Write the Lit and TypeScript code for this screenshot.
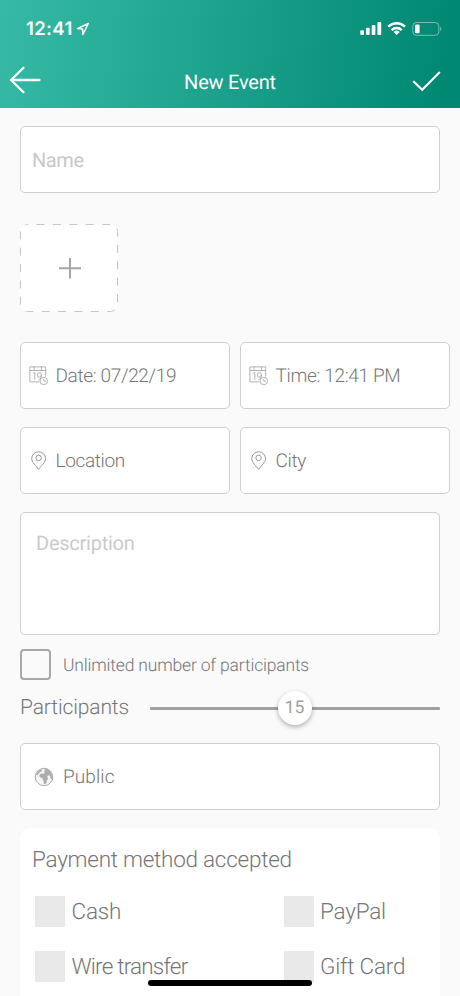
import { LitElement, html, css, svg } from "lit";
import { customElement } from "lit/decorators.js";

const calendarIcon = svg`<svg class="ico" width="20" height="20" viewBox="0 0 20 20" fill="none" stroke="#a9a9a9" stroke-width=".9">
  <path d="M10.500 15.900H.9V.9h15.800v9.800M.9 4.500h15.800M5 .5v4M12.400 .5v4"/>
  <path d="M4 7.500 5.800 6.600v7.200M12.400 8.900a2.100 2.300 0 1 0-4.200 0 2.100 2.300 0 0 0 4.200 0c0 2.600-.7 4.500-3 4.900"/>
  <circle cx="14.800" cy="15" r="3.700"/><path d="M14.800 12.800v2.400h2"/>
</svg>`;

const pinIcon = svg`<svg class="ico" width="20" height="20" viewBox="0 0 20 20" fill="none" stroke="#999" stroke-width="1">
  <path d="M9.600 18.300C7.200 15.100 2.700 11.100 2.700 7.700a6.950 6.950 0 0 1 13.900 0c0 3.400-4.500 7.400-7 10.600z"/>
  <circle cx="9.600" cy="6.900" r="2.700"/>
</svg>`;

const globeIcon = svg`<svg class="ico" width="20" height="20" viewBox="0 0 20 20">
  <circle cx="10" cy="10" r="8.700" fill="#f6f6f6" stroke="#ababab" stroke-width="1"/>
  <path fill="#adadad" d="M10.300 2.100 13.500 2l2.600 1.900 1.600 2.900.6 3-.5 2.600-1.200-.6-.2-2.200-1.300-1.300-1.400.2-.5 1.800 1 1.200-1.300 1.900-.4 2.300-1.400 1.500-1.200-.3-.3-2.600-.9-1.500.2-1.400-1.800-.6-1.800-1.400.4-1.800 1.900-1.200 2.500.1.900-1.200-1.200-.9 1.100-1z"/>
  <path fill="#adadad" d="M2 7.300 4.300 4l2.400-1.500L8.400 3 7 4.800l-1.900.9-.6 1.500-1.800 1z"/>
</svg>`;

@customElement("app-root")
export class AppRoot extends LitElement {
  static styles = css`
    :host { display: block; width: 460px; height: 996px; overflow: hidden; position: relative; background: #fafafa; font-family: Roboto, "Liberation Sans", sans-serif; font-weight: 300; color: #767679; text-rendering: geometricPrecision; }
    * { box-sizing: border-box; }
    svg { display: block; flex: none; }
    span { white-space: nowrap; }
    header { height: 108px; background: linear-gradient(98deg, #36baa6 0%, #1aa08b 50%, #018873 96%); color: #fff; display: flex; flex-direction: column; }
    .status { height: 54px; padding: 4px 18px 0 26px; display: flex; align-items: center; }
    .clock { font: 600 18.500px/22px Inter, sans-serif; letter-spacing: .35px; }
    .loc { margin: -1px 0 0 3px; }
    .sys { margin-left: auto; margin-top: -2px; }
    .nav { height: 54px; display: grid; grid-template-columns: 60px 1fr 60px; align-items: center; }
    .back { margin-top: -2px; }
    .title { font-size: 20px; font-weight: 400; text-align: center; letter-spacing: -.22px; padding-top: 2px; }
    main { padding: 18px 20px 0; display: flex; flex-direction: column; }
    .box { background: #fff; border: 1px solid #d0d0d0; border-radius: 5px; height: 67px; display: flex; align-items: center; font-size: 19px; }
    .hint { color: #c8c8cc; font-weight: 400; font-size: 20px; }
    .name { padding-left: 11px; }
    .nm { letter-spacing: -.4px; }
    .add { margin-top: 31px; width: 98px; height: 88px; }
    .pair { display: grid; grid-template-columns: 210px 210px; gap: 10px; margin-top: 30px; }
    .pair.next { margin-top: 18px; }
    .pair .box { padding-left: 8px; gap: 6.500px; letter-spacing: -.35px; }
    .desc { height: 123px; margin-top: 18px; padding: 18px 15px; align-items: flex-start; }
    .desc span { line-height: 24px; color: #cbcbcd; letter-spacing: -.25px; }
    .unlimited { display: flex; align-items: center; margin-top: 14px; height: 31px; gap: 12px; font-size: 17.500px; letter-spacing: -.18px; }
    .unlimited span { padding-top: 2px; }
    .check { width: 31px; height: 31px; border: 2px solid #a8a8a8; border-radius: 4px; }
    .participants { height: 54px; display: flex; align-items: center; font-size: 21px; gap: 20px; letter-spacing: -.13px; }
    .participants .lbl { width: 109.500px; padding-top: 2px; }
    .slider { flex: 1; height: 35px; display: flex; align-items: center; position: relative; margin-top: 2px; }
    .track { height: 3px; width: 100%; background: #a0a0a0; border-radius: 1px; }
    .thumb { position: absolute; left: 128px; top: 0; width: 34px; height: 34px; border-radius: 50%; background: #fff; box-shadow: 0 2px 5px rgba(0,0,0,.3); display: flex; align-items: center; justify-content: center; font-size: 17.500px; font-weight: 400; color: #a0a0a0; padding-top: 1px; }
    .public { margin-top: 9px; padding-left: 13px; gap: 9px; letter-spacing: .1px; }
    .card { background: #fff; border-radius: 10px; margin-top: 18px; height: 240px; padding: 16px 12px; }
    .ctitle { font-size: 22.500px; line-height: 33px; letter-spacing: -.25px; }
    .methods { display: grid; grid-template-columns: 248.500px 1fr; row-gap: 24px; margin: 19px 0 0 3px; }
    .method { display: flex; align-items: center; gap: 6.500px; font-size: 22.500px; height: 31px; letter-spacing: -.22px; }
    .method .tight { letter-spacing: -.8px; }
    .sq { width: 30px; height: 31px; background: #e9e9e9; }
    .home { position: absolute; left: 148px; top: 980px; width: 164px; height: 6px; border-radius: 3px; background: #000; }
  `;

  private method(name: string, cls = "") {
    return html`<div class="method"><div class="sq"></div><span class=${cls}>${name}</span></div>`;
  }

  render() {
    return html`
      <header>
        <div class="status">
          <span class="clock">12:41</span>
          <svg class="loc" width="14" height="14" viewBox="0 0 14 14" fill="none" stroke="#fff" stroke-width="1.500" stroke-linejoin="round"><path d="M12.300 1.500 1.500 6.600l5 .5.400 5.400z"/></svg>
          <svg class="sys" width="84" height="18" viewBox="0 0 84 18" fill="#fff">
            <rect x="2.300" y="11.200" width="3.700" height="4.800" rx="1"/><rect x="8" y="8.800" width="3.700" height="7.200" rx="1"/><rect x="13.700" y="6" width="3.700" height="10" rx="1"/><rect x="19.400" y="3" width="3.800" height="13" rx="1"/>
            <g fill="none" stroke="#fff" stroke-width="2.500"><path d="M30.300 7.700a12 12 0 0 1 16.800 0"/><path d="M33.700 11.100a7.200 7.200 0 0 1 10 0"/></g>
            <path d="m38.700 16-3-3a4.300 4.300 0 0 1 6 0z"/>
            <rect x="54.800" y="3.500" width="26" height="12.800" rx="3.500" fill="none" stroke="#fff" stroke-opacity=".45"/>
            <rect x="57" y="5.500" width="4.600" height="8.800" rx="1.200"/><path d="M82.200 7.800c1.600.8 1.600 3.400 0 4.200z" opacity=".5"/>
          </svg>
        </div>
        <div class="nav">
          <svg class="back" width="50" height="30" viewBox="0 0 50 30" fill="none" stroke="#fff" stroke-width="2.300" stroke-linecap="round" stroke-linejoin="round"><path d="M23.500 2.800 11 15l12.500 12.200M11 15h28.500"/></svg>
          <span class="title">New Event</span>
          <svg width="50" height="30" viewBox="0 0 50 30" fill="none" stroke="#fff" stroke-width="2.200"><path d="m13.300 15.200 8.900 8.600L39.800 6"/></svg>
        </div>
      </header>
      <main>
        <div class="box name"><span class="hint nm">Name</span></div>
        <svg class="add" width="98" height="88" viewBox="0 0 98 88">
          <rect x=".5" y=".5" width="97" height="87" rx="7" fill="#fff" stroke="#c6c6c6" stroke-dasharray="8 8.400" stroke-dashoffset="-9"/>
          <path d="M39 44.300h22M50 34v20.500" stroke="#a6a6a6" stroke-width="2"/>
        </svg>
        <div class="pair">
          <div class="box">${calendarIcon}<span>Date: 07/22/19</span></div>
          <div class="box">${calendarIcon}<span>Time: 12:41 PM</span></div>
        </div>
        <div class="pair next">
          <div class="box">${pinIcon}<span>Location</span></div>
          <div class="box">${pinIcon}<span>City</span></div>
        </div>
        <div class="box desc"><span class="hint">Description</span></div>
        <div class="unlimited"><div class="check"></div><span>Unlimited number of participants</span></div>
        <div class="participants">
          <span class="lbl">Participants</span>
          <div class="slider"><div class="track"></div><div class="thumb">15</div></div>
        </div>
        <div class="box public">${globeIcon}<span>Public</span></div>
        <section class="card">
          <div class="ctitle"><span>Payment method accepted</span></div>
          <div class="methods">
            ${this.method("Cash")}${this.method("PayPal")}
            ${this.method("Wire transfer", "tight")}${this.method("Gift Card")}
          </div>
        </section>
      </main>
      <div class="home"></div>
    `;
  }
}
